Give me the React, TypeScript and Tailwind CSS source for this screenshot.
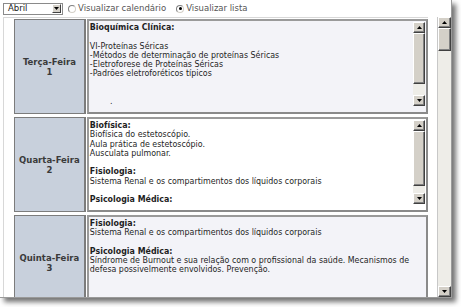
import React from 'react';

const font = { fontFamily: '"DejaVu Sans", Verdana, sans-serif' };
const bodyFont = { fontFamily: '"DejaVu Sans Condensed", "DejaVu Sans", Tahoma, sans-serif' };

const Arrow = ({ up }: { up?: boolean }) => (
  <svg width="5" height="3" viewBox="0 0 5 3">
    <polygon points={up ? '2.5,0 5,3 0,3' : '0,0 5,0 2.5,3'} fill="#000" />
  </svg>
);

const SbButton = ({ up }: { up?: boolean }) => (
  <div className="h-[11px] w-full flex items-center justify-center bg-[#d4d0c8] border border-t-white border-l-white border-r-[#404040] border-b-[#404040] shadow-[inset_-1px_-1px_0_#808080]">
    <Arrow up={up} />
  </div>
);

const ScrollBar = ({ thumb, className }: { thumb: string; className?: string }) => (
  <div className={`flex flex-col bg-[#eeede8] ${className ?? ''}`}>
    <SbButton up />
    <div className={`${thumb} w-full bg-[#d4d0c8] border border-t-white border-l-white border-r-[#404040] border-b-[#404040] shadow-[inset_-1px_-1px_0_#808080]`} />
    <div className="flex-1" />
    <SbButton />
  </div>
);

type Line = { t: string; b?: boolean };

const rows: { label: string; n: string; bg: string; scroll: boolean; thumb: string; lines: Line[] }[] = [
  {
    label: 'Terça-Feira',
    n: '1',
    bg: 'bg-[#f3f3f8]',
    scroll: true,
    thumb: 'h-[51px]',
    lines: [
      { t: 'Bioquímica Clínica:', b: true },
      { t: '' },
      { t: 'VI-Proteínas Séricas' },
      { t: '-Métodos de determinação de proteínas Séricas' },
      { t: '-Eletroforese de Proteínas Séricas' },
      { t: '-Padrões eletroforéticos típicos' },
      { t: '' },
      { t: '' },
      { t: '\u00a0\u00a0\u00a0\u00a0\u00a0\u00a0\u00a0\u00a0.' },
    ],
  },
  {
    label: 'Quarta-Feira',
    n: '2',
    bg: 'bg-white',
    scroll: true,
    thumb: 'h-[55px]',
    lines: [
      { t: 'Biofísica:', b: true },
      { t: 'Biofísica do estetoscópio.' },
      { t: 'Aula prática de estetoscópio.' },
      { t: 'Ausculata pulmonar.' },
      { t: '' },
      { t: 'Fisiologia:', b: true },
      { t: 'Sistema Renal e os compartimentos dos líquidos corporais' },
      { t: '' },
      { t: 'Psicologia Médica:', b: true },
      { t: 'Síndrome de Burnout e sua relação com o profissional da saúde.' },
    ],
  },
  {
    label: 'Quinta-Feira',
    n: '3',
    bg: 'bg-[#f3f3f8]',
    scroll: false,
    thumb: '',
    lines: [
      { t: 'Fisiologia:', b: true },
      { t: 'Sistema Renal e os compartimentos dos líquidos corporais' },
      { t: '' },
      { t: 'Psicologia Médica:', b: true },
      { t: 'Síndrome de Burnout e sua relação com o profissional da saúde. Mecanismos de' },
      { t: 'defesa possivelmente envolvidos. Prevenção.' },
    ],
  },
];

const Radio = ({ on }: { on?: boolean }) => (
  <span className="w-[8px] h-[8px] rounded-full bg-white border border-t-[#808080] border-l-[#808080] border-r-[#d4d0c8] border-b-[#d4d0c8] flex items-center justify-center">
    {on && <span className="w-[3px] h-[3px] rounded-full bg-black" />}
  </span>
);

export default function App() {
  return (
    <div className="w-[461px] h-[307px] bg-white overflow-hidden" style={font}>
      <div className="w-[452px] h-[298px] bg-white flex flex-col border-r border-b border-[#9a9a9a] shadow-[4px_4px_5px_rgba(0,0,0,0.55)]">
        {/* top bar */}
        <div className="h-[17px] flex items-center pl-[3px] text-[8.5px] text-[#555]">
          <div className="w-[60px] h-[12px] border border-[#8a8a8a] flex items-center pl-[4px] pr-[1px] bg-white">
            <span className="flex-1 text-[#222]">Abril</span>
            <div className="w-[9px] h-[9px] flex items-center justify-center bg-[#d4d0c8] border border-t-white border-l-white border-r-[#404040] border-b-[#404040]">
              <Arrow />
            </div>
          </div>
          <div className="flex items-center ml-[5px] gap-[2px]">
            <Radio />
            <span>Visualizar calendário</span>
          </div>
          <div className="flex items-center ml-[10px] gap-[2px]">
            <Radio on />
            <span>Visualizar lista</span>
          </div>
        </div>

        {/* body */}
        <div className="flex-1 flex overflow-hidden">
          <div className="flex-1 ml-[3px] border-l border-t border-[#d8d8d8] pl-[10px] pt-[1px] flex flex-col gap-[3px] overflow-hidden">
            {rows.map((r) => (
              <div key={r.label} className="flex gap-[1px] h-[95px] shrink-0">
                <div className="w-[72px] bg-[#c8d0dc] border border-[#7c7c7c] border-r-2 flex flex-col items-center justify-center text-[8.5px] leading-[10px] font-bold text-[#3a3a3a]">
                  <span>{r.label}</span>
                  <span>{r.n}</span>
                </div>
                <div className={`w-[342px] ${r.bg} border-2 border-[#8a8a8a] border-t-[#9a9a9a] border-l-[#9a9a9a]`}>
                  <div className="h-[86px] flex">
                    <div className="flex-1 overflow-hidden pl-[1px] pt-[2px] text-[8.8px] leading-[9.3px] text-[#1e1e1e]" style={bodyFont}>
                      {r.lines.map((l, i) => (
                        <div key={i} className={`h-[9.3px] whitespace-nowrap ${l.b ? 'font-bold' : ''}`}>
                          {l.t}
                        </div>
                      ))}
                    </div>
                    {r.scroll && <ScrollBar thumb={r.thumb} className="w-[12px] my-[1px] mr-[1px]" />}
                  </div>
                </div>
              </div>
            ))}
          </div>
          <ScrollBar thumb="h-[23px]" className="w-[14px] ml-[9px] border-l border-[#c8c8c8]" />
        </div>
      </div>
    </div>
  );
}
